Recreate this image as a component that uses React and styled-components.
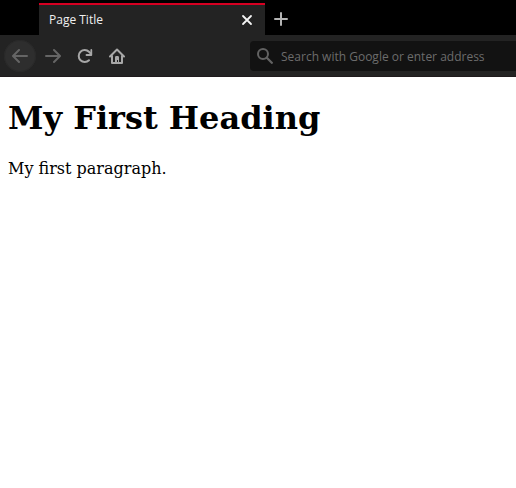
import React from "react";
import styled, { createGlobalStyle } from "styled-components";

const GlobalStyle = createGlobalStyle`
  * { box-sizing: border-box; }
  body { margin: 0; background: #fff; overflow: hidden; }
`;

const Browser = styled.div`
  display: flex;
  flex-direction: column;
  height: 100vh;
  background: #fff;
  font-family: "Open Sans", "Noto Sans", sans-serif;
`;

const TabStrip = styled.div`
  display: flex;
  height: 35px;
  padding: 3px 0 0 39px;
  background: #000;
`;

const Tab = styled.div`
  display: flex;
  align-items: center;
  justify-content: space-between;
  width: 226px;
  padding: 0 10px;
  border-top: 2px solid #d70022;
  background: #232323;
`;

const TabTitle = styled.span`
  font-size: 12px;
  line-height: 16px;
  color: #f0f0f0;
`;

const IconButton = styled.button`
  display: flex;
  align-items: center;
  justify-content: center;
  flex: none;
  width: ${(p) => p.$size || 32}px;
  height: ${(p) => p.$size || 32}px;
  padding: 0;
  border: 0;
  border-radius: ${(p) => (p.$round ? "50%" : "0")};
  background: ${(p) => (p.$round ? "#2e2e2e" : "transparent")};
  box-shadow: ${(p) => (p.$round ? "inset 0 0 0 1px #292929" : "none")};
  color: ${(p) => p.$color || "#a7a7a7"};
`;

const Toolbar = styled.div`
  display: flex;
  align-items: center;
  height: 42px;
  padding-left: 4px;
  background: #232323;
  border-bottom: 1px solid #1f1a1c;
`;

const NavButtons = styled.div`
  display: flex;
  width: 246px;
  padding-top: 1px;

  button + button { margin-left: 1px; }
  button + button + button { margin-left: 0; }
`;

const AddressBar = styled.div`
  display: flex;
  align-items: center;
  flex: 1;
  height: 30px;
  margin-top: 1px;
  padding-left: 7px;
  gap: 8px;
  border-radius: 4px 0 0 4px;
  background: #121212;
  color: #626262;
`;

const Placeholder = styled.span`
  padding-top: 1px;
  font-size: 12px;
  line-height: 17px;
  color: #6c6c6c;
  white-space: nowrap;
`;

const Page = styled.main`
  flex: 1;
  padding: 0 8px;
  font-family: "DejaVu Serif", serif;
  font-size: 16px;
  color: #000;
`;

const Heading = styled.h1`
  margin: 22px 0;
  font-size: 32px;
  line-height: 38px;
`;

const Paragraph = styled.p`
  margin: 0;
  line-height: 19px;
`;

const Icon = ({ size = 16, width = 2, children, ...rest }) => (
  <svg
    width={size}
    height={size}
    viewBox={`0 0 ${size} ${size}`}
    fill="none"
    stroke="currentColor"
    strokeWidth={width}
    strokeLinecap="round"
    strokeLinejoin="round"
    {...rest}
  >
    {children}
  </svg>
);

export default function App() {
  return (
    <Browser>
      <GlobalStyle />
      <TabStrip>
        <Tab>
          <TabTitle>Page Title</TabTitle>
          <IconButton $size={16} $color="#f5f5f5" aria-label="Close tab">
            <Icon width={1.8}>
              <path d="M4 4l8 8M12 4l-8 8" />
            </Icon>
          </IconButton>
        </Tab>
        <IconButton $color="#b4b4b4" aria-label="New tab">
          <Icon>
            <path d="M8 2v12M2 8h12" />
          </Icon>
        </IconButton>
      </TabStrip>
      <Toolbar>
        <NavButtons>
          <IconButton $round $color="#656565" aria-label="Back">
            <Icon>
              <path d="M15 8H1.5M7 2L1 8l6 6" />
            </Icon>
          </IconButton>
          <IconButton $color="#656565" aria-label="Forward">
            <Icon>
              <path d="M1 8h13.500M9 2l6 6-6 6" />
            </Icon>
          </IconButton>
          <IconButton aria-label="Reload">
            <Icon>
              <path d="M12 12.200A6 6 0 1 1 12 3.800L13.800 5.600" />
              <path d="M14.300 2v5H9.500" strokeWidth="1.800" />
            </Icon>
          </IconButton>
          <IconButton aria-label="Home">
            <Icon>
              <path d="M1 8.500L8 1.500l7 7M3 7.500V15h10V7.500" />
              <path d="M6 15V9.500c0-.8.500-1.500 1.200-1.500h1.600c.7 0 1.200.7 1.200 1.500V15H9v-3H8v3z" fill="currentColor" stroke="none" />
            </Icon>
          </IconButton>
        </NavButtons>
        <AddressBar>
          <Icon>
            <circle cx="6" cy="6" r="5" />
            <path d="M9.800 9.800l5 5" strokeWidth="2.300" />
          </Icon>
          <Placeholder>Search with Google or enter address</Placeholder>
        </AddressBar>
      </Toolbar>
      <Page>
        <Heading>My First Heading</Heading>
        <Paragraph>My first paragraph.</Paragraph>
      </Page>
    </Browser>
  );
}
